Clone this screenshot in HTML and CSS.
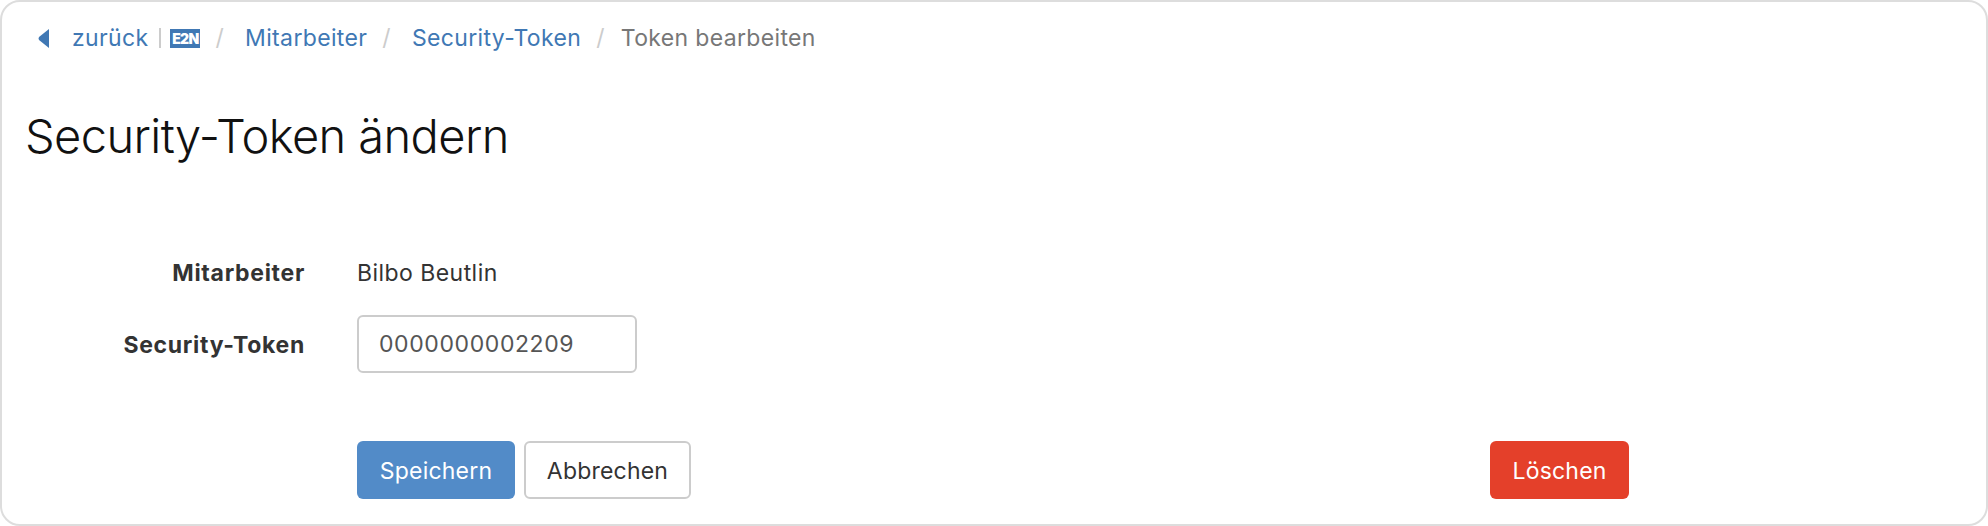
FILE: index.html
```html
<!DOCTYPE html>
<html lang="de">
<head>
    <meta charset="utf-8">
    <title>Security-Token ändern</title>
    <link rel="stylesheet" href="styles.css">
</head>
<body>

<div class="card">

    <nav class="breadcrumb">
        <a class="back" href="#">
            <svg class="back-icon" width="11" height="19" viewBox="0 0 11 19"><path d="M11 0V19L1 11Q0 9.5 1 8Z"/></svg>
            zurück
        </a>
        <span class="pipe"></span>
        <a class="logo" href="#">E2N</a>
        <span class="sep">/</span>
        <a href="#">Mitarbeiter</a>
        <span class="sep">/</span>
        <a href="#">Security-Token</a>
        <span class="sep sep-last">/</span>
        <span class="current">Token bearbeiten</span>
    </nav>

    <h1 class="title">Security-Token ändern</h1>

    <form class="token-form">
        <div class="row">
            <label class="row-label">Mitarbeiter</label>
            <span class="row-value">Bilbo Beutlin</span>
        </div>
        <div class="row row-input">
            <label class="row-label" for="token">Security-Token</label>
            <input class="input" id="token" type="text" value="0000000002209">
        </div>
        <div class="actions">
            <button class="btn btn-primary" type="button">Speichern</button>
            <button class="btn btn-default" type="button">Abbrechen</button>
            <button class="btn btn-danger" type="button">Löschen</button>
        </div>
    </form>

</div>

</body>
</html>
```

FILE: styles.css
```css
html, body {
    margin: 0;
    padding: 0;
    background-color: #fff;
    font-family: Inter, "Liberation Sans", sans-serif;
    color: #333;
}

.card {
    box-sizing: border-box;
    height: 526px;
    border: 2px solid #ddd;
    border-radius: 20px;
    background-color: #fff;
}

.breadcrumb {
    display: flex;
    align-items: center;
    height: 34px;
    padding: 19px 0 0 36px;
    font-size: 23px;
    letter-spacing: 0.35px;
}

.breadcrumb a {
    color: #4078b4;
    text-decoration: none;
}

.back {
    display: flex;
    align-items: center;
}

.back-icon {
    margin-right: 23px;
    fill: #4078b4;
}

.pipe {
    width: 2px;
    height: 20px;
    margin: 0 9px 0 11px;
    background-color: #ccc;
}

.breadcrumb .logo {
    width: 30px;
    height: 19px;
    background-color: #4078b4;
    color: #fff;
    font-size: 14px;
    font-weight: 900;
    line-height: 19px;
    letter-spacing: -0.6px;
    text-align: center;
}

.sep {
    margin: 0 21px 0 15px;
    color: #ccc;
}

.sep-last {
    margin-right: 16px;
}

.current {
    color: #777;
}

.title {
    margin: 51px 0 0 23px;
    font-size: 47px;
    font-weight: 300;
    line-height: 60px;
    letter-spacing: -0.6px;
    color: #111;
}

.token-form {
    margin-top: 92px;
    font-size: 23px;
}

.row {
    display: flex;
    align-items: center;
    height: 30px;
}

.row-input {
    height: 58px;
    margin-top: 27px;
}

.row-input .row-label {
    padding-top: 2px;
}

.row-label {
    box-sizing: border-box;
    width: 303px;
    font-weight: 700;
    letter-spacing: 0.7px;
    text-align: right;
}

.row-value {
    margin-left: 52px;
    letter-spacing: 0.45px;
}

.input {
    box-sizing: border-box;
    width: 280px;
    height: 58px;
    margin-left: 52px;
    padding: 0 20px;
    border: 2px solid #ccc;
    border-radius: 6px;
    background-color: #fff;
    font-family: inherit;
    font-size: 23px;
    letter-spacing: 0.6px;
    color: #555;
}

.actions {
    display: flex;
    margin: 68px 0 0 355px;
    width: 1272px;
}

.btn {
    box-sizing: border-box;
    height: 58px;
    padding: 1px 0 0;
    border: 2px solid transparent;
    border-radius: 6px;
    font-family: inherit;
    font-size: 23px;
    letter-spacing: 0.2px;
}

.btn-primary {
    width: 158px;
    background-color: #528bc8;
    color: #fff;
}

.btn-default {
    width: 167px;
    margin-left: 9px;
    border-color: #ccc;
    background-color: #fff;
    color: #333;
}

.btn-danger {
    width: 139px;
    margin-left: auto;
    background-color: #e4402a;
    color: #fff;
}
```
